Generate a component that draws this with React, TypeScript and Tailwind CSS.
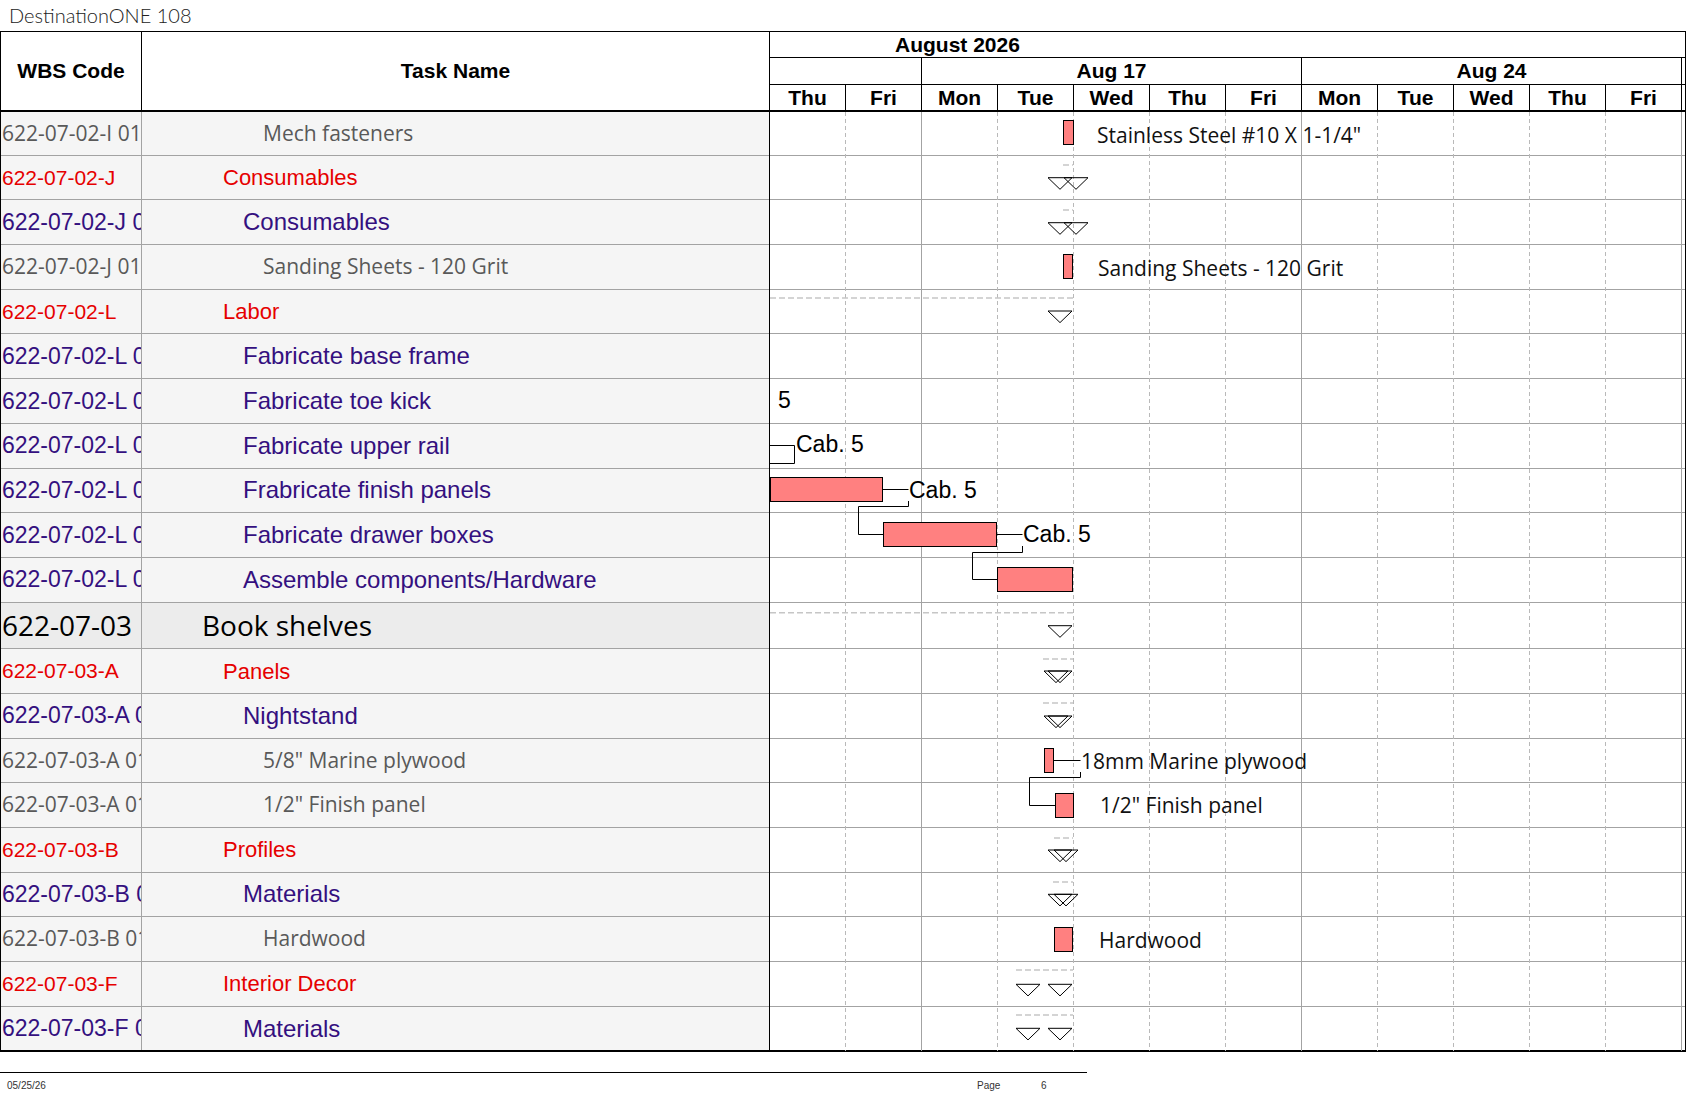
import React from 'react';

type Level = 'top' | 'red' | 'purple' | 'gray';

interface Row {
  level: Level;
  code: string;
  name: string;
  h: string;
}

const ROWS: Row[] = [
  { level: 'gray', code: '622-07-02-I 01 01', name: 'Mech fasteners', h: 'h-[43.7px]' },
  { level: 'red', code: '622-07-02-J', name: 'Consumables', h: 'h-[44.7px]' },
  { level: 'purple', code: '622-07-02-J 01', name: 'Consumables', h: 'h-[44.7px]' },
  { level: 'gray', code: '622-07-02-J 01 01', name: 'Sanding Sheets - 120 Grit', h: 'h-[44.7px]' },
  { level: 'red', code: '622-07-02-L', name: 'Labor', h: 'h-[44.7px]' },
  { level: 'purple', code: '622-07-02-L 01', name: 'Fabricate base frame', h: 'h-[44.7px]' },
  { level: 'purple', code: '622-07-02-L 02', name: 'Fabricate toe kick', h: 'h-[44.7px]' },
  { level: 'purple', code: '622-07-02-L 03', name: 'Fabricate upper rail', h: 'h-[44.7px]' },
  { level: 'purple', code: '622-07-02-L 04', name: 'Frabricate finish panels', h: 'h-[44.7px]' },
  { level: 'purple', code: '622-07-02-L 05', name: 'Fabricate drawer boxes', h: 'h-[44.7px]' },
  { level: 'purple', code: '622-07-02-L 06', name: 'Assemble components/Hardware', h: 'h-[44.7px]' },
  { level: 'top', code: '622-07-03', name: 'Book shelves', h: 'h-[46.6px]' },
  { level: 'red', code: '622-07-03-A', name: 'Panels', h: 'h-[44.7px]' },
  { level: 'purple', code: '622-07-03-A 01', name: 'Nightstand', h: 'h-[44.7px]' },
  { level: 'gray', code: '622-07-03-A 01 01', name: '5/8" Marine plywood', h: 'h-[44.7px]' },
  { level: 'gray', code: '622-07-03-A 01 02', name: '1/2" Finish panel', h: 'h-[44.7px]' },
  { level: 'red', code: '622-07-03-B', name: 'Profiles', h: 'h-[44.7px]' },
  { level: 'purple', code: '622-07-03-B 01', name: 'Materials', h: 'h-[44.7px]' },
  { level: 'gray', code: '622-07-03-B 01 01', name: 'Hardwood', h: 'h-[44.7px]' },
  { level: 'red', code: '622-07-03-F', name: 'Interior Decor', h: 'h-[44.7px]' },
  { level: 'purple', code: '622-07-03-F 01', name: 'Materials', h: 'h-[43.7px]' },
];

const STYLE: Record<Level, { code: string; name: string; bg: string }> = {
  top: {
    code: "font-['Open_Sans',sans-serif] text-[28px] text-black",
    name: "font-['Open_Sans',sans-serif] text-[28px] text-black pl-[60px]",
    bg: 'bg-[#ececec]',
  },
  red: {
    code: "font-['Liberation_Sans',Arial,sans-serif] text-[21px] text-[#e60000]",
    name: "font-['Liberation_Sans',Arial,sans-serif] text-[22px] text-[#e60000] pl-[81px]",
    bg: 'bg-[#f5f5f5]',
  },
  purple: {
    code: "font-['Liberation_Sans',Arial,sans-serif] text-[23px] text-[#34107f]",
    name: "font-['Liberation_Sans',Arial,sans-serif] text-[24px] text-[#34107f] pl-[101px]",
    bg: 'bg-[#f5f5f5]',
  },
  gray: {
    code: "font-['Open_Sans',sans-serif] text-[21px] text-[#595959]",
    name: "font-['Open_Sans',sans-serif] text-[21px] text-[#595959] pl-[121px]",
    bg: 'bg-[#f5f5f5]',
  },
};

const DAYS = ['Thu', 'Fri', 'Mon', 'Tue', 'Wed', 'Thu', 'Fri', 'Mon', 'Tue', 'Wed', 'Thu', 'Fri'];

// gantt drawing, page coordinates (chart body starts at x=770, y=112)
const BARS = [
  [1063, 120, 10, 24],
  [1063, 254, 9, 24],
  [770, 477, 112, 24],
  [883, 522, 113, 24],
  [997, 567, 75, 24],
  [1044, 748, 9, 24],
  [1055, 793, 18, 24],
  [1054, 927, 18, 24],
];

const LINKS = [
  '769,445.5 794.5,445.5 794.5,463.5 769,463.5',
  '882,489.5 908.5,489.5',
  '908.5,501 908.5,506.5 858.5,506.5 858.5,534.5 883,534.5',
  '996,534.5 1022.5,534.5',
  '1022.5,546 1022.5,552.5 972.5,552.5 972.5,579.5 997,579.5',
  '1053,760.5 1080.5,760.5',
  '1080.5,772 1080.5,777.5 1029.5,777.5 1029.5,805.5 1055,805.5',
];

const SUMMARY_LINES = [
  [1063, 1073, 165],
  [1063, 1073, 210],
  [770, 1073, 298],
  [770, 1073, 612.7],
  [1043, 1073, 659],
  [1043, 1073, 703],
  [1054, 1073, 838],
  [1053, 1073, 882],
  [1016, 1073, 970],
  [1016, 1073, 1015],
];

const TRIANGLES = [
  [1048, 177.7], [1064, 177.7],
  [1048, 222.7], [1064, 222.7],
  [1048, 311],
  [1048, 625.7],
  [1044, 671], [1048, 671],
  [1044, 716], [1048, 716],
  [1048, 850], [1054, 850],
  [1048, 894.3], [1054, 894.3],
  [1016, 984.3], [1048, 984.3],
  [1016, 1028.3], [1048, 1028.3],
];

const NOTES: [string, number, number][] = [
  ['Stainless Steel #10 X 1-1/4"', 1097, 142.7],
  ['Sanding Sheets - 120 Grit', 1098, 276],
  ['18mm Marine plywood', 1081, 769],
  ['1/2" Finish panel', 1100, 813],
  ['Hardwood', 1099, 948],
];

const CAB: [string, number, number][] = [
  ['5', 778, 407.7],
  ['Cab. 5', 796, 452],
  ['Cab. 5', 909, 497.5],
  ['Cab. 5', 1023, 542],
];

const GanttDrawing: React.FC = () => {
  const grid = Array.from({ length: 12 }, (_, i) => 770 + 76 * (i + 1) - 0.5);
  return (
    <svg
      className="absolute left-0 top-0 overflow-visible"
      width={915}
      height={939}
      viewBox="770 112 915 939"
    >
      {grid.map((x, i) => (
        <line
          key={i}
          x1={x}
          x2={x}
          y1={112}
          y2={1051}
          stroke={i === 1 || i === 6 || i === 11 ? '#a3a3a3' : '#b9b9b9'}
          strokeWidth={1}
          strokeDasharray={i === 1 || i === 6 || i === 11 ? undefined : '4 3'}
        />
      ))}
      {SUMMARY_LINES.map(([x1, x2, y], i) => (
        <line key={i} x1={x1} x2={x2} y1={y} y2={y} stroke="#c6c6c6" strokeWidth={1.5} strokeDasharray="6 3" />
      ))}
      {TRIANGLES.map(([x, y], i) => (
        <polygon
          key={i}
          points={`${x},${y} ${x + 24},${y} ${x + 12},${y + 11.6}`}
          fill="none"
          stroke="#000"
          strokeWidth={1}
        />
      ))}
      {LINKS.map((p, i) => (
        <polyline key={i} points={p} fill="none" stroke="#000" strokeWidth={1} />
      ))}
      {BARS.map(([x, y, w, h], i) => (
        <rect key={i} x={x + 0.5} y={y + 0.5} width={w} height={h} fill="#ff8080" stroke="#000" strokeWidth={1} />
      ))}
      {NOTES.map(([t, x, y], i) => (
        <text key={i} x={x} y={y} fontFamily="'Open Sans', sans-serif" fontSize={21} fill="#111">
          {t}
        </text>
      ))}
      {CAB.map(([t, x, y], i) => (
        <text key={i} x={x} y={y} fontFamily="'Liberation Sans', Arial, sans-serif" fontSize={23} fill="#000">
          {t}
        </text>
      ))}
    </svg>
  );
};

export default function App() {
  return (
    <div className="w-[1687px] bg-white text-black">
      <div className="h-[31px] pt-[4px] pl-[9px] font-['Lato',sans-serif] font-light text-[20px] leading-[22px] text-[#222]">
        DestinationONE 108
      </div>

      <div className="flex w-[1686px] border border-b-2 border-black">
        {/* left table */}
        <div className="w-[769px] shrink-0 border-r border-black">
          <div className="flex h-[80px] border-b-2 border-black bg-white font-['Liberation_Sans',Arial,sans-serif] text-[21px] font-bold">
            <div className="flex w-[141px] shrink-0 items-center justify-center border-r border-black">WBS Code</div>
            <div className="flex flex-1 items-center justify-center">Task Name</div>
          </div>
          {ROWS.map((r, i) => {
            const s = STYLE[r.level];
            return (
              <div
                key={i}
                className={`flex ${r.h} ${s.bg} ${i < ROWS.length - 1 ? 'border-b border-[#a3a3a3]' : ''}`}
              >
                <div className={`flex w-[141px] shrink-0 items-center overflow-hidden whitespace-nowrap border-r border-[#a3a3a3] pl-[1px] ${s.code}`}>
                  {r.code}
                </div>
                <div className={`flex flex-1 items-center overflow-hidden whitespace-nowrap ${s.name}`}>{r.name}</div>
              </div>
            );
          })}
        </div>

        {/* chart */}
        <div className="flex-1">
          <div className="border-b-2 border-black font-['Liberation_Sans',Arial,sans-serif] text-[21px] font-bold">
            <div className="flex h-[26px] items-center border-b border-black pl-[125px]">August 2026</div>
            <div className="flex h-[27px] border-b border-black">
              <div className="w-[152px] border-r border-black" />
              <div className="flex w-[380px] items-center justify-center border-r border-black">Aug 17</div>
              <div className="flex w-[380px] items-center justify-center border-r border-black">Aug 24</div>
              <div className="flex-1" />
            </div>
            <div className="flex h-[25px]">
              {DAYS.map((d, i) => (
                <div key={i} className="flex w-[76px] items-center justify-center border-r border-black">
                  {d}
                </div>
              ))}
              <div className="flex-1" />
            </div>
          </div>
          <div className="relative">
            {ROWS.map((r, i) => (
              <div key={i} className={`${r.h} ${i < ROWS.length - 1 ? 'border-b border-[#a3a3a3]' : ''}`} />
            ))}
            <GanttDrawing />
          </div>
        </div>
      </div>

      <div className="mt-[20px] w-[1087px] border-t border-black">
        <div className="flex pt-[7px] font-['Liberation_Sans',Arial,sans-serif] text-[10px] leading-[12px] text-[#333]">
          <span className="w-[977px] pl-[7px]">05/25/26</span>
          <span className="w-[64px]">Page</span>
          <span>6</span>
        </div>
      </div>
    </div>
  );
}
